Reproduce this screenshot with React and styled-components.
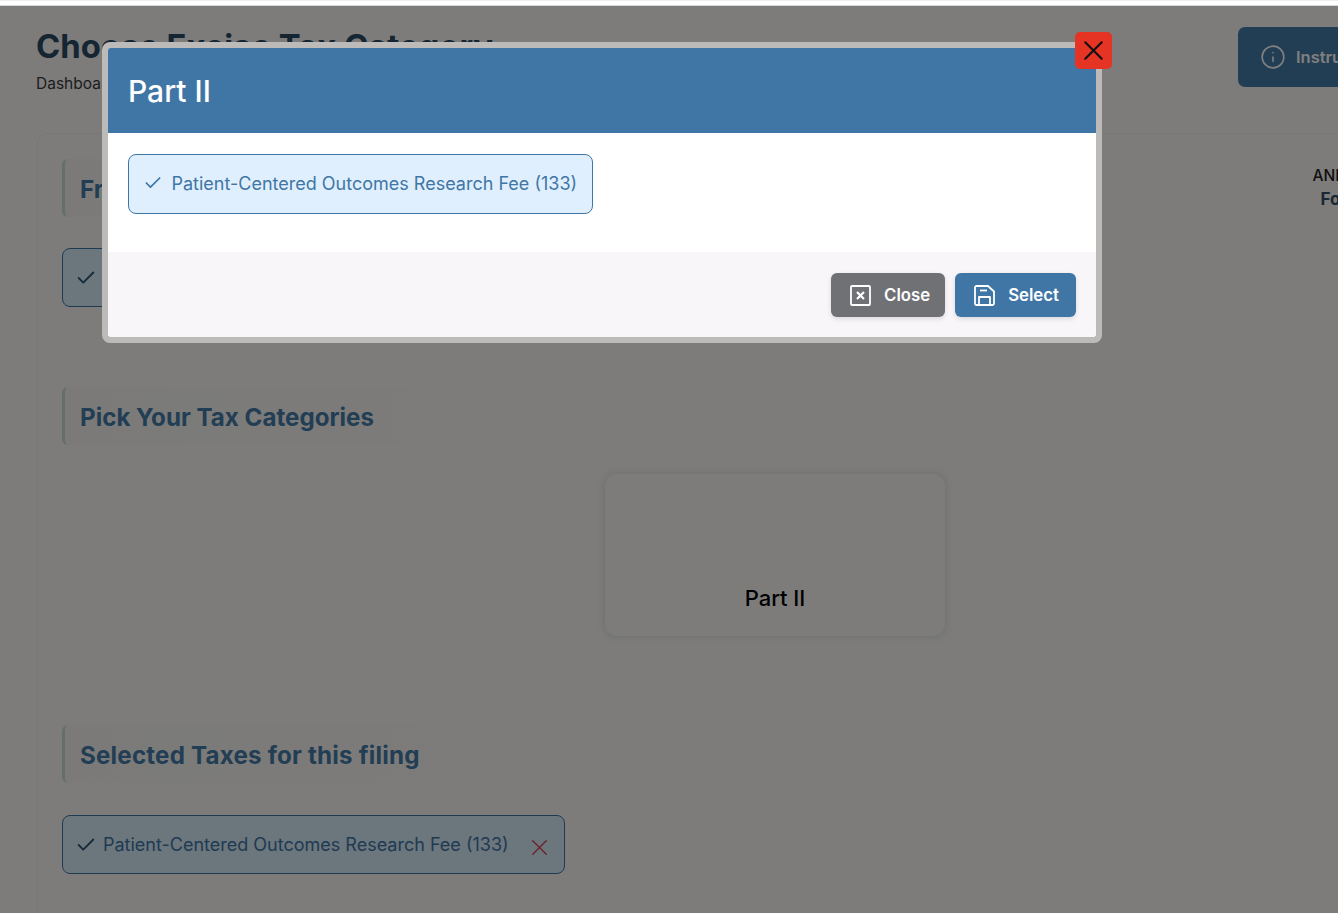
import React from 'react'
import styled, { createGlobalStyle } from 'styled-components'
import { Check, X, Info } from 'lucide-react'

const Global = createGlobalStyle`
html,body{
    margin:0;
    padding:0;
    background:#faf8f6;
}
*{
    box-sizing:border-box;
}
body{
    font-family:"Inter","Liberation Sans",sans-serif;
}
`

function SaveIcon() {
    return (
        <svg width="21" height="21" viewBox="0 0 21 21" fill="none" stroke="currentColor" strokeWidth="1.8" strokeLinejoin="round">
            <path d="M2.500 1h11.500l6 5.500v12a1.500 1.500 0 0 1-1.500 1.500h-16A1.500 1.500 0 0 1 1 18.500v-16A1.500 1.500 0 0 1 2.500 1z" />
            <path d="M5 20v-8h11v8" />
            <path d="M6 5.500h7" />
        </svg>
    )
}

function CloseBoxIcon() {
    return (
        <svg width="21" height="21" viewBox="0 0 21 21" fill="none" stroke="currentColor" strokeWidth="1.800">
            <rect x="1" y="1" width="19" height="19" rx="1" />
            <path d="M7 7l7 7M14 7l-7 7" strokeWidth="2.200" />
        </svg>
    )
}

function App() {
    return (
        <>
            <Global />
            <Page>
                <TopStrip />
                <Main>
                    <Header>
                        <div>
                            <Title>Choose Excise Tax Category</Title>
                            <Crumb>Dashboard</Crumb>
                        </div>
                        <InstructionsBtn>
                            <Info size={26} strokeWidth={1.5} />
                            Instructions
                        </InstructionsBtn>
                    </Header>
                    <Card>
                        <TopSection>
                            <div>
                                <SectionTitle>Frequently Used</SectionTitle>
                                <TaxChip $top={31}>
                                    <Check size={22} />
                                    <ChipLabel>Patient-Centered Outcomes Research Fee (133)</ChipLabel>
                                </TaxChip>
                            </div>
                            <FormNote>
                                <span>AND</span>
                                <strong>Form 720</strong>
                            </FormNote>
                        </TopSection>
                        <SectionTitle $top={80}>Pick Your Tax Categories</SectionTitle>
                        <PartRow>
                            <PartCard>Part II</PartCard>
                        </PartRow>
                        <SectionTitle $top={89} $spacing={0.2}>Selected Taxes for this filing</SectionTitle>
                        <TaxChip $top={32}>
                            <Check size={22} />
                            <ChipLabel>Patient-Centered Outcomes Research Fee (133)</ChipLabel>
                            <RemoveIcon size={27} strokeWidth={1.1} />
                        </TaxChip>
                    </Card>
                </Main>
                <Overlay />
                <Modal>
                    <DismissBtn>
                        <X size={33} strokeWidth={1.5} />
                    </DismissBtn>
                    <ModalInner>
                        <ModalHead>Part II</ModalHead>
                        <ModalBody>
                            <OptionChip>
                                <Check size={20} strokeWidth={2} />
                                <span>Patient-Centered Outcomes Research Fee (133)</span>
                            </OptionChip>
                        </ModalBody>
                        <ModalFoot>
                            <FootBtn $gray>
                                <CloseBoxIcon />
                                Close
                            </FootBtn>
                            <FootBtn>
                                <SaveIcon />
                                Select
                            </FootBtn>
                        </ModalFoot>
                    </ModalInner>
                </Modal>
            </Page>
        </>
    )
}

export default App

const Page = styled.div`
position:relative;
width:1338px;
height:913px;
overflow:hidden;
background:#faf8f6;
`
const TopStrip = styled.div`
height:6px;
background:#fff;
border-top:1px solid #eeeeee;
border-bottom:1px solid #d8d8d8;
`
const Main = styled.div`
width:1513px;
padding:15px 0 0 36px;
`
const Header = styled.div`
display:flex;
justify-content:space-between;
width:1404px;
height:112px;
padding-top:6px;
`
const Title = styled.h1`
margin:0;
font-size:32.8px;
line-height:38px;
font-weight:700;
color:#2b4a63;
`
const Crumb = styled.div`
margin-top:9px;
font-size:15.5px;
line-height:20px;
color:#3b3b3b;
`
const InstructionsBtn = styled.div`
display:flex;
align-items:center;
gap:10px;
width:202px;
height:60px;
padding-left:22px;
background:#457ca9;
color:#fff;
border-radius:7px;
font-size:16.500px;
font-weight:600;
`
const Card = styled.div`
margin-left:1px;
padding:25px 24px 0;
height:800px;
border:1px solid #f0eeec;
border-radius:10px;
`
const TopSection = styled.div`
display:flex;
justify-content:space-between;
width:1337px;
`
const SectionTitle = styled.h2`
margin:${p => p.$top || 0}px 0 0;
display:flex;
align-items:center;
width:fit-content;
min-width:450px;
height:58px;
padding:2px 60px 0 15px;
border-left:3px solid #c6dcdb;
border-radius:6px;
background:linear-gradient(90deg,#f6f5f3,#faf8f6);
font-size:24.150px;
letter-spacing:${p => p.$spacing || 0}px;
font-weight:700;
color:#457ca9;
`
const TaxChip = styled.div`
display:flex;
align-items:center;
width:fit-content;
height:59px;
margin-top:${p => p.$top}px;
padding:0 11px 0 12px;
border:1px solid #3f76a5;
border-radius:8px;
background:#d8ecfb;
color:#3f76a5;
svg{
    flex-shrink:0;
    color:#2c5775;
}
`
const ChipLabel = styled.span`
margin-left:6px;
font-size:18px;
white-space:nowrap;
`
const RemoveIcon = styled(X)`
margin:5px 0 0 17px;
&&{
    color:#d63a4a;
}
`
const FormNote = styled.div`
display:flex;
flex-direction:column;
gap:5px;
margin-top:7px;
font-size:15.500px;
font-weight:500;
line-height:19px;
color:#222;
strong{
    margin-left:8px;
    font-size:17px;
    color:#32506a;
}
`
const PartRow = styled.div`
display:flex;
justify-content:center;
width:1426px;
margin-top:29px;
`
const PartCard = styled.div`
display:flex;
align-items:flex-end;
justify-content:center;
width:340px;
height:162px;
padding-bottom:25px;
border-radius:12px;
box-shadow:0 0 6px 2px rgba(80,110,120,.13);
font-size:22px;
font-weight:500;
color:#000;
`
const Overlay = styled.div`
position:absolute;
top:6px;
left:0;
right:0;
bottom:0;
background:rgba(0,0,0,.5);
`
const Modal = styled.div`
position:absolute;
top:42px;
left:102px;
width:1000px;
height:301px;
border:6px solid #bcbbba;
border-radius:8px;
`
const DismissBtn = styled.div`
position:absolute;
top:-16px;
right:-16px;
z-index:2;
display:flex;
align-items:center;
justify-content:center;
width:37px;
height:37px;
background:#e53423;
border-radius:5px;
color:#111;
`
const ModalInner = styled.div`
display:flex;
flex-direction:column;
height:100%;
overflow:hidden;
border-radius:3px;
background:#fff;
`
const ModalHead = styled.div`
display:flex;
align-items:center;
height:85px;
padding:0 20px;
background:#3f76a5;
color:#fff;
font-size:30px;
font-weight:500;
`
const ModalBody = styled.div`
height:119px;
padding:21px 20px 0;
`
const OptionChip = styled.div`
display:flex;
align-items:center;
gap:8.500px;
width:465px;
height:60px;
padding:0 0 2px 14px;
border:1px solid #3f76a5;
border-radius:8px;
background:#e0effd;
color:#3f76a5;
font-size:18px;
white-space:nowrap;
svg{
    flex-shrink:0;
}
`
const ModalFoot = styled.div`
flex:1;
display:flex;
justify-content:flex-end;
gap:10px;
padding:21px 20px 0 0;
background:#f8f6f9;
`
const FootBtn = styled.div`
display:flex;
align-items:center;
gap:13px;
height:44px;
padding:0 ${p => p.$gray ? 15 : 17}px 0 19px;
border-radius:6px;
background:${p => p.$gray ? '#6f7174' : '#3f76a5'};
box-shadow:0 2px 5px rgba(0,0,0,.12);
color:#fff;
font-size:16.800px;
font-weight:600;
svg{
    flex-shrink:0;
}
`
